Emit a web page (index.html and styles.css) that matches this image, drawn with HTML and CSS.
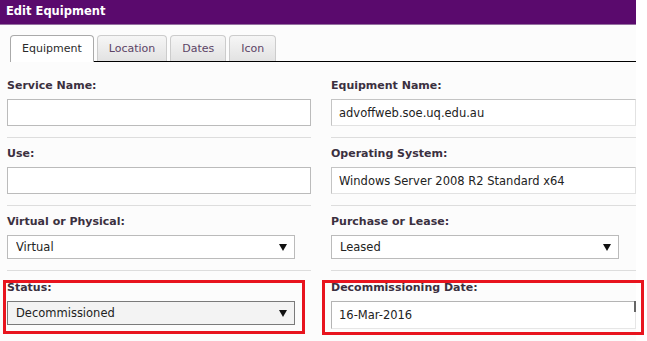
FILE: index.html
```html
<!DOCTYPE html>
<html lang="en">
<head>
    <meta charset="UTF-8">
    <title>Edit Equipment</title>
    <link rel="stylesheet" href="styles.css">
</head>
<body>
    <div class="panel">
        <div class="header">Edit Equipment</div>
        <div class="tabs">
            <a href="#" class="tab active">Equipment</a>
            <div class="tabs-rest">
                <a href="#" class="tab">Location</a>
                <a href="#" class="tab">Dates</a>
                <a href="#" class="tab">Icon</a>
            </div>
        </div>
        <div class="form">
            <div class="field">
                <label>Service Name:</label>
                <input type="text" class="text" value="">
            </div>
            <div class="field">
                <label>Equipment Name:</label>
                <input type="text" class="text soft" value="advoffweb.soe.uq.edu.au">
            </div>
            <div class="field">
                <label>Use:</label>
                <input type="text" class="text" value="">
            </div>
            <div class="field">
                <label>Operating System:</label>
                <input type="text" class="text soft" value="Windows Server 2008 R2 Standard x64">
            </div>
            <div class="field">
                <label>Virtual or Physical:</label>
                <div class="pick">
                    <select><option>Virtual</option><option>Physical</option></select>
                </div>
            </div>
            <div class="field">
                <label>Purchase or Lease:</label>
                <div class="pick">
                    <select><option>Leased</option><option>Purchased</option></select>
                </div>
            </div>
            <div class="field last">
                <label>Status:</label>
                <div class="pick focus">
                    <select><option>Decommissioned</option><option>Active</option></select>
                </div>
                <span class="mark mark-left"></span>
            </div>
            <div class="field last">
                <label>Decommissioning Date:</label>
                <input type="text" class="text soft date" value="16-Mar-2016">
                <span class="edge"></span>
                <span class="mark mark-right"></span>
            </div>
        </div>
    </div>
</body>
</html>
```
FILE: styles.css
```css
html,body{
    margin: 0;
    padding: 0;
    background: #ffffff;
    font: 11px/15px "DejaVu Sans",Verdana,sans-serif;
    color: #333333;
}
.panel{
    width: 636px;
    height: 341px;
    background: #fcfcfc;
}
.header{
    height: 24px;
    line-height: 23px;
    padding-left: 6px;
    background: #5a0a6d;
    border-bottom: 1px solid #94709f;
    color: white;
    font-size: 11.5px;
    font-weight: bold;
}
.tabs{
    display: flex;
    padding: 10px 0 0 10px;
}
.tabs-rest{
    flex: 1;
    display: flex;
    gap: 3px;
    padding-left: 3px;
    border-bottom: 1px solid #000000;
}
.tab{
    display: block;
    height: 25px;
    line-height: 25px;
    padding: 0 11px;
    border: 1px solid #cccccc;
    border-bottom: 0;
    border-radius: 4px 4px 0 0;
    background: linear-gradient(#f6f6f6,#e2e2e2);
    color: #5c4466;
    font-size: 11px;
    text-decoration: none;
}
.tab.active{
    height: 26px;
    border-color: #aaaaaa;
    background: #ffffff;
    color: #2b2b2b;
}
.form{
    display: grid;
    grid-template-columns: 304px 305px;
    column-gap: 20px;
    padding: 8px 0 0 7px;
}
.field{
    position: relative;
    padding: 8px 0 11px;
    border-bottom: 1px solid #dddddd;
}
.field.last{
    padding-top: 9px;
    border-bottom: 0;
}
.field label{
    display: block;
    margin-bottom: 6px;
    font-weight: bold;
    color: #3b3040;
}
.text{
    display: block;
    box-sizing: border-box;
    width: 100%;
    height: 27px;
    margin: 0;
    padding: 0 7px;
    border: 1px solid #bbbbbb;
    background: #ffffff;
    font: 11.5px "DejaVu Sans",Verdana,sans-serif;
    color: #222222;
    outline: none;
}
.text.soft{
    border-color: #c4c4c4 #e2e2e2 #e2e2e2 #c4c4c4;
}
.text.date{
    height: 28px;
    border-color: #b4b4b4 #e6e6e6 #e6e6e6 #b4b4b4;
}
.edge{
    position: absolute;
    right: 0;
    top: 30px;
    width: 2px;
    height: 11px;
    background: #666666;
}
.pick{
    position: relative;
    width: 288px;
}
.pick select{
    display: block;
    box-sizing: border-box;
    width: 100%;
    height: 24px;
    margin: 0;
    padding: 0 20px 0 8px;
    border: 1px solid #bbbbbb;
    border-radius: 0;
    background: #ffffff;
    font: 11.5px "DejaVu Sans",Verdana,sans-serif;
    color: #222222;
    -webkit-appearance: none;
    appearance: none;
    outline: none;
}
.pick::after{
    content: "";
    position: absolute;
    right: 8px;
    top: 9px;
    border-left: 4px solid transparent;
    border-right: 4px solid transparent;
    border-top: 7px solid #111111;
}
.pick.focus select{
    border-color: #7a7a7a;
    background: #f3f3f3;
}
.mark{
    position: absolute;
    top: 9px;
    height: 54px;
    box-sizing: border-box;
    border: 3px solid #e8141e;
}
.mark-left{
    left: -4px;
    width: 302px;
}
.mark-right{
    left: -9px;
    width: 322px;
    height: 55px;
}
```
